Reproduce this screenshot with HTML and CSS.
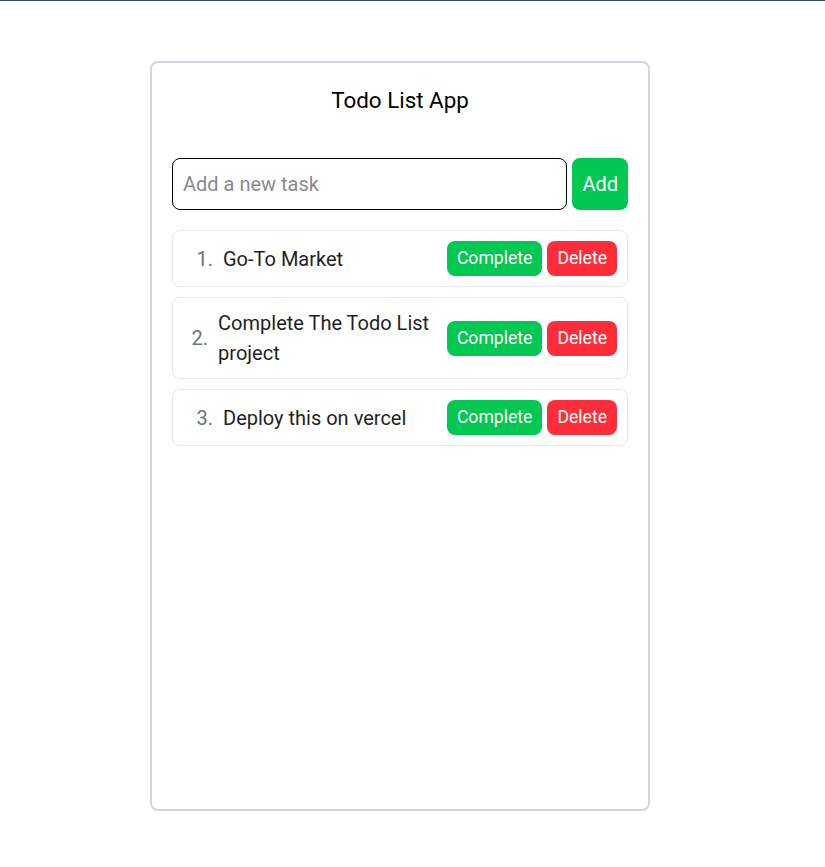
FILE: index.html
```html
<!DOCTYPE html>
<html lang="en">
<head>
<meta charset="utf-8">
<title>Todo List App</title>
<link rel="stylesheet" href="styles.css">
</head>
<body>
<div class="topbar"></div>
<main class="page">
  <section class="card">
    <h1 class="title">Todo List App</h1>
    <form class="add-form">
      <input class="add-input" type="text" placeholder="Add a new task">
      <button class="add-btn" type="button">Add</button>
    </form>
    <ol class="tasks">
      <li class="task">
        <div class="task-label"><span class="task-num">1.</span><span class="task-text">Go-To Market</span></div>
        <div class="task-actions"><button class="btn btn-complete" type="button">Complete</button><button class="btn btn-delete" type="button">Delete</button></div>
      </li>
      <li class="task">
        <div class="task-label"><span class="task-num">2.</span><span class="task-text">Complete The Todo List project</span></div>
        <div class="task-actions"><button class="btn btn-complete" type="button">Complete</button><button class="btn btn-delete" type="button">Delete</button></div>
      </li>
      <li class="task">
        <div class="task-label"><span class="task-num">3.</span><span class="task-text">Deploy this on vercel</span></div>
        <div class="task-actions"><button class="btn btn-complete" type="button">Complete</button><button class="btn btn-delete" type="button">Delete</button></div>
      </li>
    </ol>
  </section>
</main>
</body>
</html>
```

FILE: styles.css
```css
* { box-sizing: border-box; }
html, body { margin: 0; padding: 0; background: #fff; }
body { font-family: Roboto, "Liberation Sans", Arial, sans-serif; color: #1f1f1f; }

.topbar { height: 1px; background: #2c4d6d; }

.page { padding: 60px 0 0 150px; }

.card {
  width: 500px;
  height: 750px;
  border: 2px solid #d1d5db;
  border-radius: 8px;
  padding: 20px;
}

.title {
  margin: 4px 0 45px;
  font-size: 22.4px;
  font-weight: 400;
  text-align: center;
  color: #000;
  line-height: 26px;
}

.add-form { display: flex; gap: 5px; margin: 0 0 20px; }
.add-input {
  flex: 1;
  height: 52px;
  border: 1px solid #000;
  border-radius: 8px;
  padding: 0 10px;
  font-family: inherit;
  font-size: 20px;
  color: #1f1f1f;
  outline: none;
}
.add-input::placeholder { color: #8a8a8a; }
.add-btn {
  height: 52px;
  border: 0;
  border-radius: 8px;
  padding: 0 10px;
  background: #00c853;
  color: #fff;
  font-family: inherit;
  font-size: 20px;
}

.tasks { list-style: none; margin: 0; padding: 0; display: flex; flex-direction: column; gap: 10px; }
.task {
  display: flex;
  align-items: center;
  justify-content: space-between;
  gap: 8px;
  border: 1px solid #e5e7eb;
  border-radius: 8px;
  padding: 10px 10px 10px 16px;
}
.task-label { display: flex; align-items: center; min-width: 0; }
.task-num {
  width: 24px;
  flex: 0 1 24px;
  min-width: 0;
  text-align: right;
  margin-right: 10px;
  color: #6b7280;
  font-size: 20px;
  line-height: 30px;
  white-space: nowrap;
}
.task-text { font-size: 20px; line-height: 30px; min-width: 0; }

.task-actions { display: flex; gap: 5px; flex-shrink: 0; }
.btn {
  border: 0;
  border-radius: 8px;
  padding: 7px 10px;
  font-family: inherit;
  font-size: 17.6px;
  line-height: 21px;
  color: #fff;
}
.btn-complete { background: #00c853; }
.btn-delete { background: #ff2d3a; }
```
